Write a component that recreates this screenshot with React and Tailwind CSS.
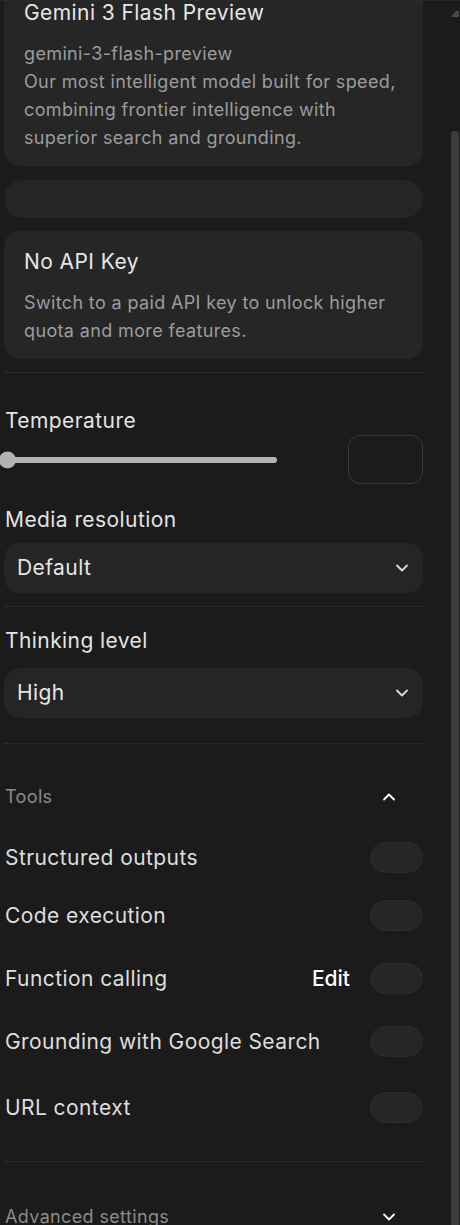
import React from 'react';

const font = { fontFamily: 'Inter, "Noto Sans", sans-serif' };

function Chevron({ up = false, className = '' }) {
    return (
        <svg width="16" height="16" viewBox="0 0 16 16" className={className} fill="none">
            <path
                d={up ? 'M3 10.5 L8 5.5 L13 10.5' : 'M3 5.5 L8 10.5 L13 5.5'}
                stroke="currentColor"
                strokeWidth="1.8"
                strokeLinecap="round"
                strokeLinejoin="round"
            />
        </svg>
    );
}

function Toggle() {
    return <div className="w-[53px] h-[31px] rounded-full bg-[#262626] border border-[#2c2c2c] shrink-0" />;
}

function Select({ value }) {
    return (
        <div className="h-[50px] rounded-2xl bg-[#252525] flex items-center justify-between pl-[13px] pr-[13px]">
            <span className="text-[21px] tracking-[0.02em] text-[#e6e6e6]">{value}</span>
            <Chevron className="text-[#dcdcdc]" />
        </div>
    );
}

const tools = [
    { label: 'Structured outputs', cls: 'mt-[25px]' },
    { label: 'Code execution', cls: 'mt-[27px]' },
    { label: 'Function calling', cls: 'mt-[32px]', edit: true },
    { label: 'Grounding with Google Search', cls: 'mt-[32px]' },
    { label: 'URL context', cls: 'mt-[35px]' },
];

export default function App() {
    return (
        <div className="w-[460px] h-[1225px] overflow-hidden bg-[#1b1b1b] border-t border-[#2a2a2a] flex" style={font}>
            {/* Panel */}
            <div className="w-[448px] pl-[4px] pr-[25px] shrink-0">
                <div className="-mt-[22px]">
                    {/* Model card */}
                    <div className="rounded-2xl bg-[#262626] px-5 pt-5 pb-[14px]">
                        <h3 className="text-[21px] tracking-[0.02em] leading-[28px] text-[#e6e6e6]">Gemini 3 Flash Preview</h3>
                        <p className="mt-[13px] text-[18px] tracking-[0.02em] leading-[28px] text-[#9c9c9c]">
                            gemini-3-flash-preview
                            <br />
                            Our most intelligent model built for speed, combining frontier intelligence with superior search and grounding.
                        </p>
                    </div>

                    <div className="mt-[14px] h-[38px] rounded-full bg-[#252525]" />

                    {/* API key card */}
                    <div className="mt-[13px] rounded-2xl bg-[#262626] px-5 pt-[17px] pb-[14px]">
                        <h3 className="text-[21px] tracking-[0.02em] leading-[28px] text-[#e6e6e6]">No API Key</h3>
                        <p className="mt-[13px] text-[18px] tracking-[0.02em] leading-[28px] text-[#9c9c9c]">
                            Switch to a paid API key to unlock higher quota and more features.
                        </p>
                    </div>

                    <div className="mt-[13px] h-px bg-[#2b2b2b]" />

                    {/* Temperature */}
                    <div className="mt-[34px] pl-px">
                        <div className="text-[21px] tracking-[0.02em] leading-[28px] text-[#e3e3e3]">Temperature</div>
                        <div className="h-[49px] flex items-center justify-between">
                            <div className="relative w-[272px] h-[6px] rounded-full bg-[#b3b3b3]">
                                <div className="absolute -left-[6px] top-1/2 -translate-y-1/2 w-[17px] h-[17px] rounded-full bg-[#b3b3b3]" />
                            </div>
                            <div className="w-[75px] h-[49px] rounded-xl border border-[#3a3a3a]" />
                        </div>
                    </div>

                    {/* Media resolution */}
                    <div className="mt-[22px] pl-px text-[21px] tracking-[0.02em] leading-[28px] text-[#e3e3e3]">Media resolution</div>
                    <div className="mt-[9px]">
                        <Select value="Default" />
                    </div>

                    <div className="mt-[13px] h-px bg-[#2b2b2b]" />

                    <div className="mt-[20px] pl-px text-[21px] tracking-[0.02em] leading-[28px] text-[#e3e3e3]">Thinking level</div>
                    <div className="mt-[13px]">
                        <Select value="High" />
                    </div>

                    <div className="mt-[25px] h-px bg-[#2b2b2b]" />

                    {/* Tools */}
                    <div className="mt-[33px] flex items-center justify-between pl-px">
                        <span className="text-[18px] tracking-[0.02em] leading-[40px] text-[#8c8c8c]">Tools</span>
                        <div className="w-10 h-10 mr-[14px] flex items-center justify-center text-white">
                            <Chevron up />
                        </div>
                    </div>

                    {tools.map((t) => (
                        <div key={t.label} className={`${t.cls} h-[31px] flex items-center justify-between pl-px`}>
                            <span className="text-[21px] tracking-[0.02em] text-[#dedede]">{t.label}</span>
                            <div className="flex items-center gap-5">
                                {t.edit && <span className="text-[21px] font-medium text-white">Edit</span>}
                                <Toggle />
                            </div>
                        </div>
                    ))}

                    <div className="mt-[38px] h-px bg-[#2b2b2b]" />

                    <div className="mt-[35px] flex items-center justify-between pl-px">
                        <span className="text-[18px] tracking-[0.02em] leading-[40px] text-[#8c8c8c]">Advanced settings</span>
                        <div className="w-10 h-10 mr-[14px] flex items-center justify-center text-white">
                            <Chevron />
                        </div>
                    </div>
                </div>
            </div>

            {/* Scrollbar */}
            <div className="w-3 flex flex-col items-end">
                <svg width="9" height="9" viewBox="0 0 9 9" className="mt-[8px] mr-[1px]">
                    <path d="M1 8 L6 2 L9 2 L9 8 Z" fill="#4a4a4a" />
                </svg>
                <div className="mt-[113px] w-[8px] flex-1 rounded-t-[3px] bg-[#3c3c3c] mr-[1px]" />
            </div>
        </div>
    );
}
